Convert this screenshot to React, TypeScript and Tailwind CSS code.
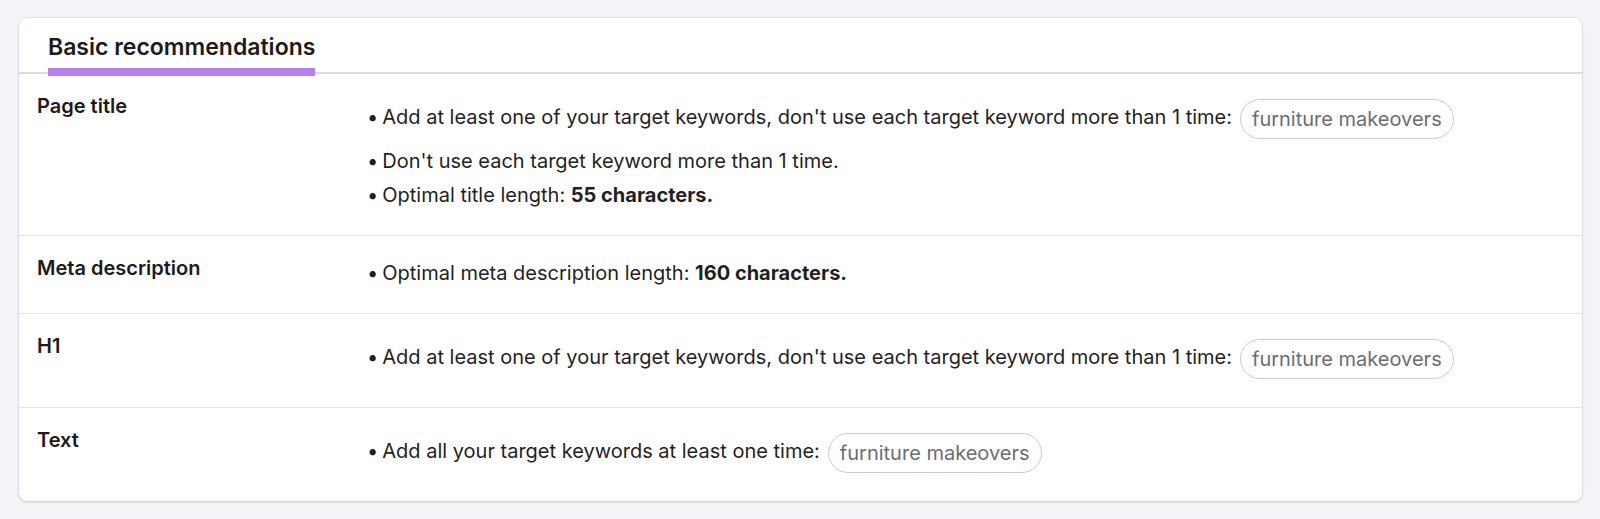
import React from "react";

const Chip = ({ children }: { children: React.ReactNode }) => (
  <span className="ml-[8px] inline-flex h-[40px] items-center rounded-full border border-[#c9cbd1] px-[11px] align-middle text-[20px] text-[#6b6d75]">
    {children}
  </span>
);

type Row = { label: string; items: React.ReactNode[] };

const rows: Row[] = [
  {
    label: "Page title",
    items: [
      <>
        Add at least one of your target keywords, don't use each target keyword more than 1 time:
        <Chip>furniture makeovers</Chip>
      </>,
      <>Don't use each target keyword more than 1 time.</>,
      <>
        Optimal title length: <span className="font-bold">55 characters.</span>
      </>,
    ],
  },
  {
    label: "Meta description",
    items: [
      <>
        Optimal meta description length: <span className="font-bold">160 characters.</span>
      </>,
    ],
  },
  {
    label: "H1",
    items: [
      <>
        Add at least one of your target keywords, don't use each target keyword more than 1 time:
        <Chip>furniture makeovers</Chip>
      </>,
    ],
  },
  {
    label: "Text",
    items: [
      <>
        Add all your target keywords at least one time:
        <Chip>furniture makeovers</Chip>
      </>,
    ],
  },
];

export default function App() {
  return (
    <div
      className="min-h-screen bg-[#f3f4f7] pl-[19px] pr-[18px] pt-[18px] pb-[17px]"
      style={{ fontFamily: "Inter, 'Noto Sans', sans-serif" }}
    >
      <div className="overflow-hidden rounded-[8px] bg-white shadow-[0_0_0_1px_rgba(0,0,0,0.05),0_1px_3px_rgba(0,0,0,0.14)]">
        <div className="border-b-2 border-[#dcdcde] pl-[29px] pt-[15px]">
          <div className="relative inline-block pb-[11px] text-[23px] font-semibold leading-[28px] text-[#1b1b1b]">
            Basic recommendations
            <span className="absolute -bottom-[4px] left-0 right-0 h-[8px] bg-[#b47ff0]" />
          </div>
        </div>
        {rows.map((row, i) => (
          <div
            key={row.label}
            className={`grid grid-cols-[330px_1fr] px-[18px] pb-[28px] pt-[20px] ${
              i > 0 ? "border-t border-[#e4e4e6]" : ""
            }`}
          >
            <div className="text-[20px] font-semibold leading-[24px] text-[#1b1b1b]">{row.label}</div>
            <ul className="mt-[5px] flex flex-col gap-[10px]">
              {row.items.map((item, j) => (
                <li key={j} className="text-[20px] leading-[24px] text-[#1f1f1f]">
                  <span className="mr-[4px]">•</span>
                  {item}
                </li>
              ))}
            </ul>
          </div>
        ))}
      </div>
    </div>
  );
}
